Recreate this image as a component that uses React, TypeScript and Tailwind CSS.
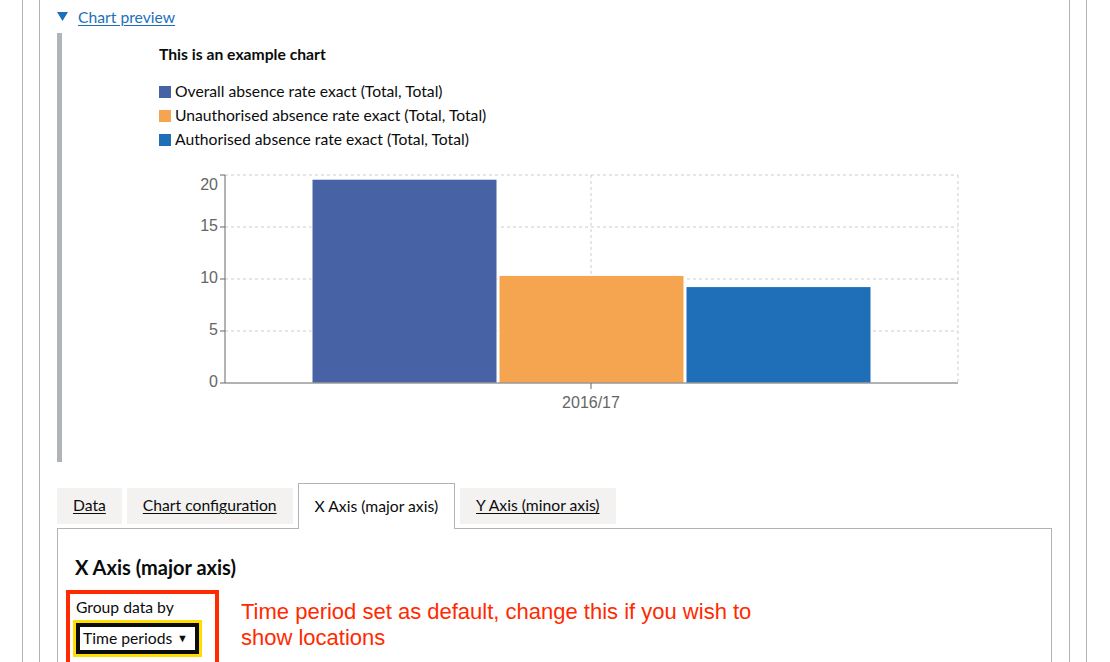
import React from 'react';

const bars = [
  { label: 'Overall absence rate exact (Total, Total)', color: '#4763a5', value: 19.6 },
  { label: 'Unauthorised absence rate exact (Total, Total)', color: '#f5a550', value: 10.35 },
  { label: 'Authorised absence rate exact (Total, Total)', color: '#1e6fb7', value: 9.27 },
];

// chart geometry (svg coords)
const AX = 65;
const RIGHT = 798;
const Y0 = 218;
const PER = 10.4;

function ExampleChart() {
  const ticks = [0, 5, 10, 15, 20];
  const xs = [152, 339, 526];
  return (
    <svg width="810" height="250" className="block">
      {/* grid */}
      {ticks.slice(1).map((t) => (
        <line key={t} x1={AX} x2={RIGHT} y1={Y0 - t * PER} y2={Y0 - t * PER} stroke="#ccc" strokeDasharray="3 3" />
      ))}
      {[431, RIGHT].map((x) => (
        <line key={x} x1={x} x2={x} y1={Y0 - 20 * PER} y2={Y0} stroke="#ccc" strokeDasharray="3 3" />
      ))}
      {/* bars */}
      {bars.map((b, i) => (
        <rect
          key={b.label}
          x={xs[i]}
          y={Y0 - b.value * PER}
          width={185}
          height={b.value * PER}
          fill={b.color}
          stroke="#fff"
          strokeWidth={1}
        />
      ))}
      {/* axes */}
      <line x1={AX} x2={AX} y1={Y0 - 20 * PER} y2={Y0} stroke="#666" />
      <line x1={AX} x2={RIGHT} y1={Y0} y2={Y0} stroke="#666" />
      {ticks.map((t) => (
        <g key={t}>
          <line x1={AX - 5} x2={AX} y1={Y0 - t * PER} y2={Y0 - t * PER} stroke="#666" />
          <text
            x={AX - 7}
            y={t === 20 ? Y0 - t * PER + 11 : Y0 - t * PER}
            textAnchor="end"
            dominantBaseline="middle"
            fontSize="16"
            fill="#666"
            fontFamily="'Liberation Sans', Arial, sans-serif"
          >
            {t}
          </text>
        </g>
      ))}
      <line x1={431} x2={431} y1={Y0} y2={Y0 + 6} stroke="#666" />
      <text x={431} y={Y0 + 21} textAnchor="middle" dominantBaseline="middle" fontSize="16" fill="#666" fontFamily="'Liberation Sans', Arial, sans-serif">
        2016/17
      </text>
    </svg>
  );
}

function Tab({ label, active }: { label: string; active?: boolean }) {
  if (active) {
    return (
      <div className="relative z-10 mb-[-1px] mr-[5px] flex h-[46px] items-center border border-b-0 border-[#b1b4b6] bg-white px-[16px] text-[15.7px] text-[#0b0c0c]">
        {label}
      </div>
    );
  }
  return (
    <div className="mb-[4px] mr-[5px] mt-[5px] flex h-[36px] items-center bg-[#f3f2f1] px-[16px] text-[15.7px] text-[#0b0c0c] underline underline-offset-2">
      {label}
    </div>
  );
}

export default function App() {
  return (
    <div className="h-[662px] overflow-hidden bg-white font-['Lato','Noto_Sans',sans-serif] text-[#0b0c0c]">
      <div className="ml-[22px] h-full w-[1065px] border-x border-[#b1b4b6]">
        <div className="ml-[16px] h-full w-[1031px] border-x border-[#b1b4b6] px-[17px]">
          {/* details */}
          <div className="flex items-center pt-[7px] leading-[20px]">
            <svg width="11" height="10" viewBox="0 0 11 10" className="mr-[10px]">
              <polygon points="0,0 11,0 5.5,9" fill="#1d70b8" />
            </svg>
            <span className="text-[15.7px] text-[#1d70b8] underline underline-offset-2">Chart preview</span>
          </div>
          <div className="mt-[6px] h-[429px] border-l-[5px] border-[#b1b4b6] pl-[97px] pt-[11px]">
            <div className="text-[15.7px] font-bold leading-[20px]">This is an example chart</div>
            <ul className="mt-[16px]">
              {bars.map((b) => (
                <li key={b.label} className="flex h-[24px] items-center text-[15.7px]">
                  <span className="mr-[4px] inline-block h-[12px] w-[12px]" style={{ background: b.color }} />
                  {b.label}
                </li>
              ))}
            </ul>
            <div className="ml-[1px] mt-[13px]">
              <ExampleChart />
            </div>
          </div>

          {/* tabs */}
          <div className="mt-[21px] flex items-start border-b border-[#b1b4b6]">
            <Tab label="Data" />
            <Tab label="Chart configuration" />
            <Tab label="X Axis (major axis)" active />
            <Tab label="Y Axis (minor axis)" />
          </div>
          <div className="h-[200px] border-x border-[#b1b4b6] px-[8px] pt-[26px]">
            <h2 className="ml-[9px] text-[20px] font-bold leading-[24px]">X Axis (major axis)</h2>
            <div className="mt-[11px] flex items-start">
              <div className="w-[153px] border-[4px] border-[#ff2a00] pb-[6px] pl-[3px] pt-[3px]">
                <div className="ml-[3px] text-[15.7px] leading-[20px]">Group data by</div>
                <div className="mt-[3px] w-[129px] border-[3px] border-[#ffdd00]">
                  <div className="flex h-[31px] items-center justify-between border-[4px] border-[#0b0c0c] bg-white pl-[3px] pr-[7px] text-[15.7px]">
                    <span>Time periods</span>
                    <span className="text-[11px]">▼</span>
                  </div>
                </div>
              </div>
              <p className="ml-[22px] mt-[9px] font-['Liberation_Sans',Arial,sans-serif] text-[22px] leading-[26px] text-[#ff2a00]">
                Time period set as default, change this if you wish to
                <br />
                show locations
              </p>
            </div>
          </div>
        </div>
      </div>
    </div>
  );
}
